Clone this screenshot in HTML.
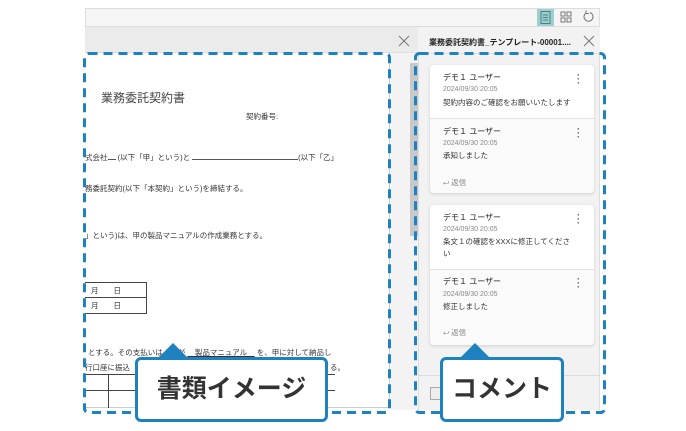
<!DOCTYPE html>
<html><head><meta charset="utf-8"><style>
*{margin:0;padding:0;box-sizing:border-box}
body{width:686px;height:431px;background:#fff;position:relative;overflow:hidden;font-family:"Liberation Sans","Noto Sans CJK JP",sans-serif;color:#333}
.a{position:absolute}
.t{position:absolute;font-size:7.5px;color:#333;white-space:nowrap}
.card{position:absolute;left:430px;width:164px;background:#fff;border-radius:4px;box-shadow:0 1px 3px rgba(0,0,0,.15)}
.nm{position:absolute;left:13px;font-size:8px;color:#222}
.dt{position:absolute;left:13px;font-size:7px;color:#888}
.bd{position:absolute;left:13px;font-size:7.5px;color:#333;width:136px;line-height:12px}
.dots{position:absolute;right:14px;font-size:9px;color:#555;font-weight:bold;line-height:4px;width:3px}
.rp{position:absolute;left:13px;font-size:7.5px;color:#888}
.sep{position:absolute;left:0;right:0;height:1px;background:#e2e2e2}
.call{position:absolute;background:#fff;border:3px solid #1e82c0;border-radius:6px;font-weight:bold;font-size:25px;color:#333;text-align:center}
.tri{position:absolute;width:0;height:0;border-left:15px solid transparent;border-right:15px solid transparent;border-bottom:15px solid #1e82c0}
</style></head><body>
<div class="a" style="left:85px;top:8px;width:515px;height:19px;background:#f5f5f5;border:1px solid #ddd"></div>
<div class="a" style="left:537px;top:9px;width:17px;height:17px;background:#9ccfd0"></div>
<svg class="a" style="left:540px;top:11px" width="11" height="13"><rect x="1" y="0.5" width="9" height="12" fill="none" stroke="#4a7f85"/><path d="M3 4h5M3 6.5h5M3 9h5" stroke="#4a7f85"/></svg>
<svg class="a" style="left:560px;top:11px" width="12" height="12"><rect x="1" y="1" width="4" height="4" fill="none" stroke="#777"/><rect x="7" y="1" width="4" height="4" fill="none" stroke="#777"/><rect x="1" y="7" width="4" height="4" fill="none" stroke="#777"/><rect x="7" y="7" width="4" height="4" fill="none" stroke="#777"/></svg>
<svg class="a" style="left:582px;top:10px" width="13" height="13"><path d="M4 3A4.5 4.5 0 1 0 8 2.5" fill="none" stroke="#777"/><path d="M4 0.5v3h3" fill="none" stroke="#777"/></svg>
<div class="a" style="left:85px;top:27px;width:333px;height:26px;background:#ebebeb;border-bottom:1px solid #ddd"></div>
<svg class="a" style="left:398px;top:35px" width="12" height="12"><path d="M1 1l10 10M11 1L1 11" stroke="#777" stroke-width="1"/></svg>
<div class="a" style="left:85px;top:53px;width:305px;height:355px;background:#fff;border-right:1px solid #ccc;border-bottom:1px solid #ccc"></div>
<div class="a" style="left:391px;top:53px;width:27px;height:357px;background:#f3f3f3"></div>
<div class="a" style="left:410px;top:63px;width:9px;height:173px;background:#c9c9c9"></div>
<div class="t" style="left:101px;top:89px;font-size:12px;color:#444">業務委託契約書</div>
<div class="t" style="left:246px;top:111px">契約番号:</div>
<div class="t" style="left:85px;top:152px">式会社<span style="display:inline-block;width:8px;border-bottom:1px solid #555"></span> (以下「甲」という)と <span style="display:inline-block;width:106px;border-bottom:1px solid #555"></span>(以下「乙」</div>
<div class="t" style="left:85px;top:183px">務委託契約(以下「本契約」という)を締結する。</div>
<div class="t" style="left:85px;top:230px">」という)は、甲の製品マニュアルの作成業務とする。</div>
<div class="a" style="left:85px;top:282px;width:62px;height:32px;border:1.5px solid #444;border-left:none"></div>
<div class="a" style="left:85px;top:297px;width:62px;height:1px;background:#444"></div>
<div class="t" style="left:91px;top:285px">月　　日</div>
<div class="t" style="left:91px;top:300px">月　　日</div>
<div class="t" style="left:88px;top:347px">とする。その支払いは、乙が <span style="text-decoration:underline">　製品マニュアル　</span> を、甲に対して納品し</div>
<div class="t" style="left:85px;top:362px">行口座に振込</div>
<div class="t" style="left:330px;top:362px">る。</div>
<div class="a" style="left:85px;top:374px;width:250px;height:1px;background:#444"></div>
<div class="a" style="left:85px;top:390px;width:250px;height:1px;background:#444"></div>
<div class="a" style="left:108px;top:374px;width:1px;height:34px;background:#444"></div>
<div class="a" style="left:418px;top:27px;width:182px;height:383px;background:#f2f2f2;border-left:1px solid #ddd;border-right:1px solid #ddd"></div>
<div class="a" style="left:418px;top:27px;width:182px;height:27px;background:#f2f2f2;border-bottom:1px solid #ddd"></div>
<div class="t" style="left:429px;top:37px;font-size:8px;font-weight:bold;color:#222">業務委託契約書_テンプレート-00001....</div>
<svg class="a" style="left:583px;top:35px" width="12" height="12"><path d="M1 1l10 10M11 1L1 11" stroke="#777"/></svg>
<div class="card" style="top:65px;height:128px">
 <div class="nm" style="top:7px">デモ１ ユーザー</div><div class="dots" style="top:8px">·<br>·<br>·</div>
 <div class="dt" style="top:21px">2024/09/30 20:05</div>
 <div class="bd" style="top:32px;width:150px">契約内容のご確認をお願いいたします</div>
 <div class="sep" style="top:53px"></div>
 <div class="a" style="left:0;right:0;top:54px;bottom:0;background:#fafafa;border-radius:0 0 4px 4px"></div>
 <div class="nm" style="top:61px">デモ１ ユーザー</div><div class="dots" style="top:62px">·<br>·<br>·</div>
 <div class="dt" style="top:75px">2024/09/30 20:05</div>
 <div class="bd" style="top:85px">承知しました</div>
 <div class="rp" style="top:112px">⮠ 返信</div>
</div>
<div class="card" style="top:205px;height:140px">
 <div class="nm" style="top:7px">デモ１ ユーザー</div><div class="dots" style="top:8px">·<br>·<br>·</div>
 <div class="dt" style="top:21px">2024/09/30 20:05</div>
 <div class="bd" style="top:31px">条文１の確認をXXXに修正してくださ<br>い</div>
 <div class="sep" style="top:64px"></div>
 <div class="a" style="left:0;right:0;top:65px;bottom:0;background:#fafafa;border-radius:0 0 4px 4px"></div>
 <div class="nm" style="top:71px">デモ１ ユーザー</div><div class="dots" style="top:72px">·<br>·<br>·</div>
 <div class="dt" style="top:86px">2024/09/30 20:05</div>
 <div class="bd" style="top:96px">修正しました</div>
 <div class="rp" style="top:122px">⮠ 返信</div>
</div>
<div class="a" style="left:418px;top:375px;width:182px;height:1px;background:#ddd"></div>
<div class="a" style="left:430px;top:387px;width:20px;height:13px;background:#eee;border:1px solid #aaa"></div>
<svg class="a" style="left:0;top:0" width="686" height="431">
<rect x="84.5" y="53.5" width="305" height="359" rx="4" fill="none" stroke="#1e82c0" stroke-width="3" stroke-dasharray="9 6"/>
<rect x="415.5" y="53.5" width="189" height="359" rx="4" fill="none" stroke="#1e82c0" stroke-width="3" stroke-dasharray="9 6"/>
</svg>
<div class="tri" style="left:158px;top:343px"></div>
<div class="call" style="left:135px;top:357px;width:193px;height:65px;line-height:58px">書類イメージ</div>
<div class="tri" style="left:460px;top:343px"></div>
<div class="call" style="left:440px;top:357px;width:124px;height:65px;line-height:58px">コメント</div>
</body></html>
